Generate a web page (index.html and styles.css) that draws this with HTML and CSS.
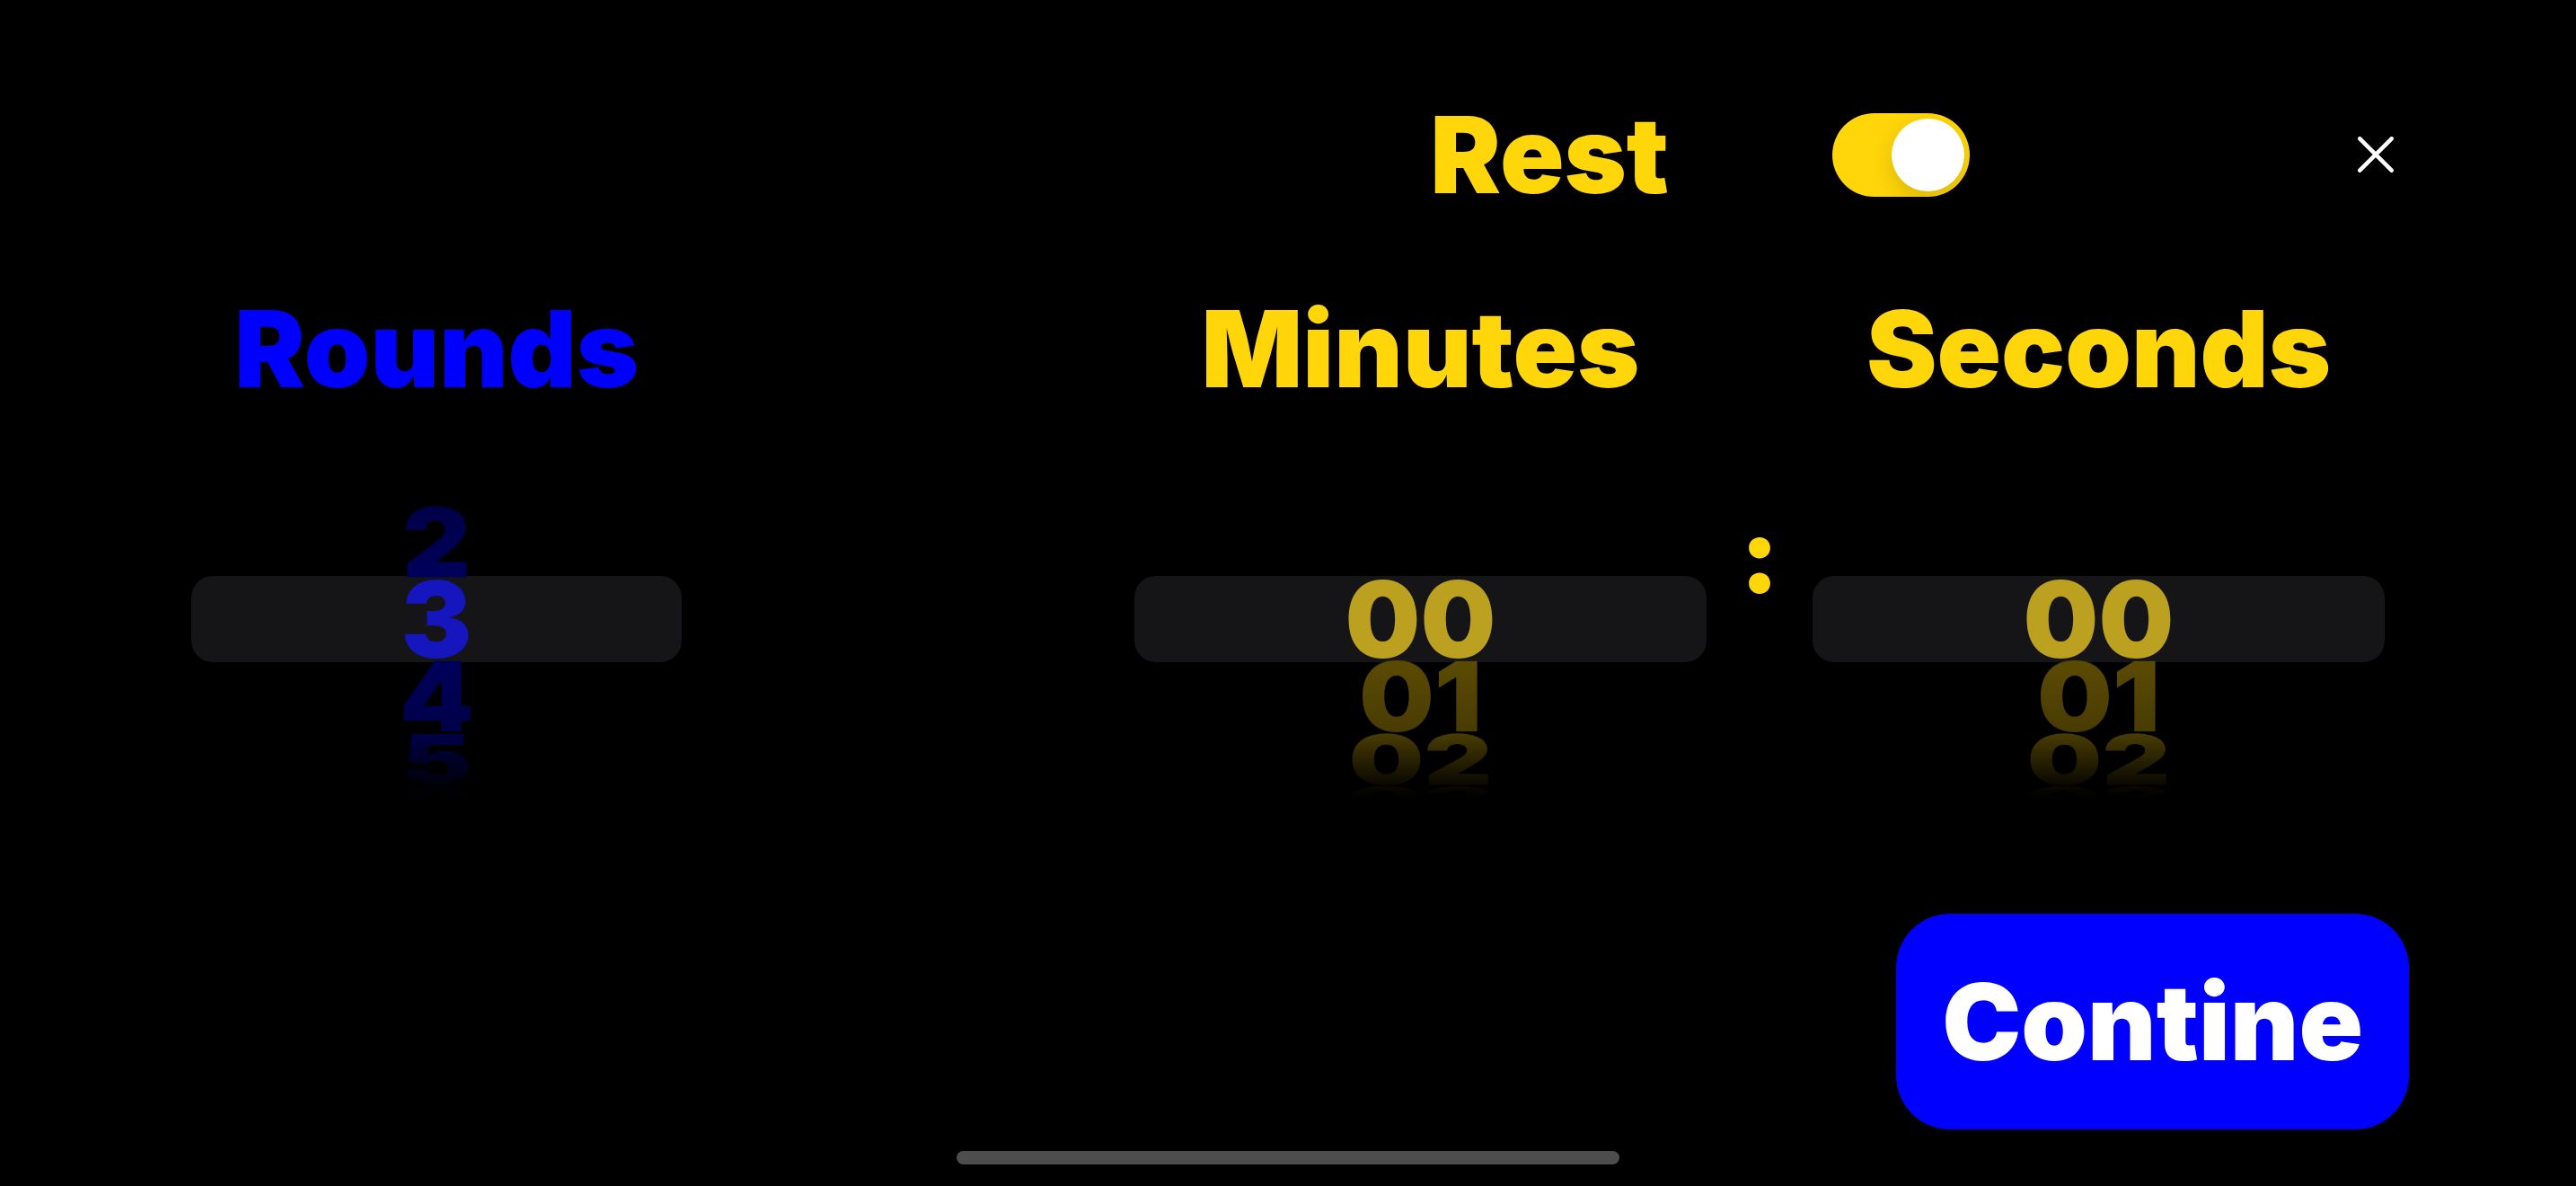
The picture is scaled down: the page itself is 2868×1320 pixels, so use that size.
FILE: index.html
```html
<!DOCTYPE html>
<html lang="en">
<head>
<meta charset="utf-8">
<meta name="viewport" content="width=device-width, initial-scale=1">
<title>Rounds and rest</title>
<link rel="stylesheet" href="styles.css">
</head>
<body>
<header class="topbar">
  <div class="rest">
    <label class="rest-label" for="rest">Rest</label>
    <input class="switch" type="checkbox" role="switch" id="rest" checked>
  </div>
  <button class="close" type="button" aria-label="Close">
    <svg class="close-icon" viewBox="0 0 40 40" aria-hidden="true"><path d="M2.3 2.3 37.7 37.7M37.7 2.3 2.3 37.7"/></svg>
  </button>
</header>

<main class="pickers">
  <section class="picker picker-rounds">
    <h2 class="title" id="rounds-title">Rounds</h2>
    <div class="wheel">
      <ul class="rows" role="listbox" aria-labelledby="rounds-title">
        <li class="row up-1" role="option">2</li>
        <li class="row selected" role="option" aria-selected="true">3</li>
        <li class="row down-1" role="option">4</li>
        <li class="row down-2" role="option">5</li>
        <li class="row down-3" role="option">6</li>
      </ul>
    </div>
  </section>

  <section class="picker picker-minutes">
    <h2 class="title" id="minutes-title">Minutes</h2>
    <div class="wheel">
      <ul class="rows" role="listbox" aria-labelledby="minutes-title">
        <li class="row selected" role="option" aria-selected="true">00</li>
        <li class="row down-1" role="option">01</li>
        <li class="row down-2" role="option">02</li>
        <li class="row down-3" role="option">03</li>
      </ul>
    </div>
  </section>

  <div class="colon">:</div>

  <section class="picker picker-seconds">
    <h2 class="title" id="seconds-title">Seconds</h2>
    <div class="wheel">
      <ul class="rows" role="listbox" aria-labelledby="seconds-title">
        <li class="row selected" role="option" aria-selected="true">00</li>
        <li class="row down-1" role="option">01</li>
        <li class="row down-2" role="option">02</li>
        <li class="row down-3" role="option">03</li>
      </ul>
    </div>
  </section>
</main>

<footer class="footer">
  <button class="continue" type="button">Contine</button>
  <div class="home-indicator"></div>
</footer>
</body>
</html>
```
FILE: styles.css
```css
:root {
  --blue: #0000ff;
  --yellow: #ffd60a;
}

* {
  box-sizing: border-box;
}

body {
  margin: 0;
  min-height: 100vh;
  display: flex;
  flex-direction: column;
  background: #000;
  color: var(--yellow);
  font-family: Inter, "Liberation Sans", sans-serif;
  font-size: 118px;
  font-weight: 900;
  line-height: 144px;
}

button {
  border: 0;
  padding: 0;
  font: inherit;
  color: #fff;
  cursor: pointer;
}

/* Top bar */
.topbar {
  display: flex;
  justify-content: flex-end;
  align-items: center;
  gap: 416px;
  padding: 100px 187px 0;
}

.rest {
  display: flex;
  align-items: center;
  gap: 182px;
}

.switch {
  appearance: none;
  display: flex;
  justify-content: flex-end;
  width: 153px;
  height: 93px;
  margin: 0;
  padding: 6px;
  border-radius: 47px;
  background: #3a3a3c;
  overflow: hidden;
}

.switch:checked {
  background: var(--yellow);
}

.switch::before {
  content: "";
  width: 81px;
  height: 81px;
  border-radius: 50%;
  background: #fff;
  box-shadow: 0 9px 24px rgba(0, 0, 0, 0.15);
}

.switch:not(:checked) {
  justify-content: flex-start;
}

.close {
  display: grid;
  place-items: center;
  width: 72px;
  height: 72px;
  background: none;
}

.close-icon {
  width: 40px;
  height: 40px;
  fill: none;
  stroke: #fff;
  stroke-width: 4.5;
  stroke-linecap: round;
}

/* Pickers */
.pickers {
  display: grid;
  grid-template-columns: 546fr 504fr 637fr 118fr 637fr;
  padding: 72px 213px 0;
}

.picker {
  display: flex;
  flex-direction: column;
  gap: 29px;
  text-align: center;
}

.picker-rounds {
  grid-column: 1;
  --selected: #1616be;
  --dimmed: #00005a;
  color: var(--blue);
}

.picker-minutes {
  grid-column: 3;
}

.picker-seconds {
  grid-column: 5;
}

.picker-minutes,
.picker-seconds {
  --selected: #bca01f;
  --dimmed: #5a4a04;
}

.title {
  margin: 0;
  font-size: inherit;
  font-weight: inherit;
}

.wheel {
  display: grid;
  align-items: center;
  height: 400px;
}

.wheel::before {
  content: "";
  grid-area: 1 / 1;
  height: 96px;
  border-radius: 24px;
  background: #151517;
}

/* Rows share one cell and are turned round a drum of 207px radius */
.rows {
  grid-area: 1 / 1;
  display: grid;
  align-items: center;
  height: 400px;
  margin: 0;
  padding: 0;
  list-style: none;
  line-height: 88px;
  --fade: transparent, rgba(0, 0, 0, 0.12) 17px, rgba(0, 0, 0, 0.8) 71px, #000 150px, #000 50%, transparent 50%;
  mask-image: linear-gradient(to bottom, var(--fade)), linear-gradient(to top, var(--fade));
}

.row {
  grid-area: 1 / 1;
  color: var(--dimmed);
  transform: rotateX(calc(var(--turn) * -24.5deg)) translateZ(207px);
}

.selected {
  color: var(--selected);
  transform: none;
}

.up-1 { --turn: -1; }
.down-1 { --turn: 1; }
.down-2 { --turn: 2; }
.down-3 { --turn: 3; }

.colon {
  grid-column: 4;
  align-self: end;
  padding-bottom: 200px;
  text-align: center;
}

/* Footer */
.footer {
  display: flex;
  flex-direction: column;
  margin-top: auto;
  padding: 0 186px 24px;
  gap: 24px;
}

.continue {
  align-self: flex-end;
  padding: 48px 51px;
  border-radius: 60px;
  background: var(--blue);
}

.home-indicator {
  align-self: center;
  width: 738px;
  height: 15px;
  border-radius: 8px;
  background: #4d4d4d;
}
```
